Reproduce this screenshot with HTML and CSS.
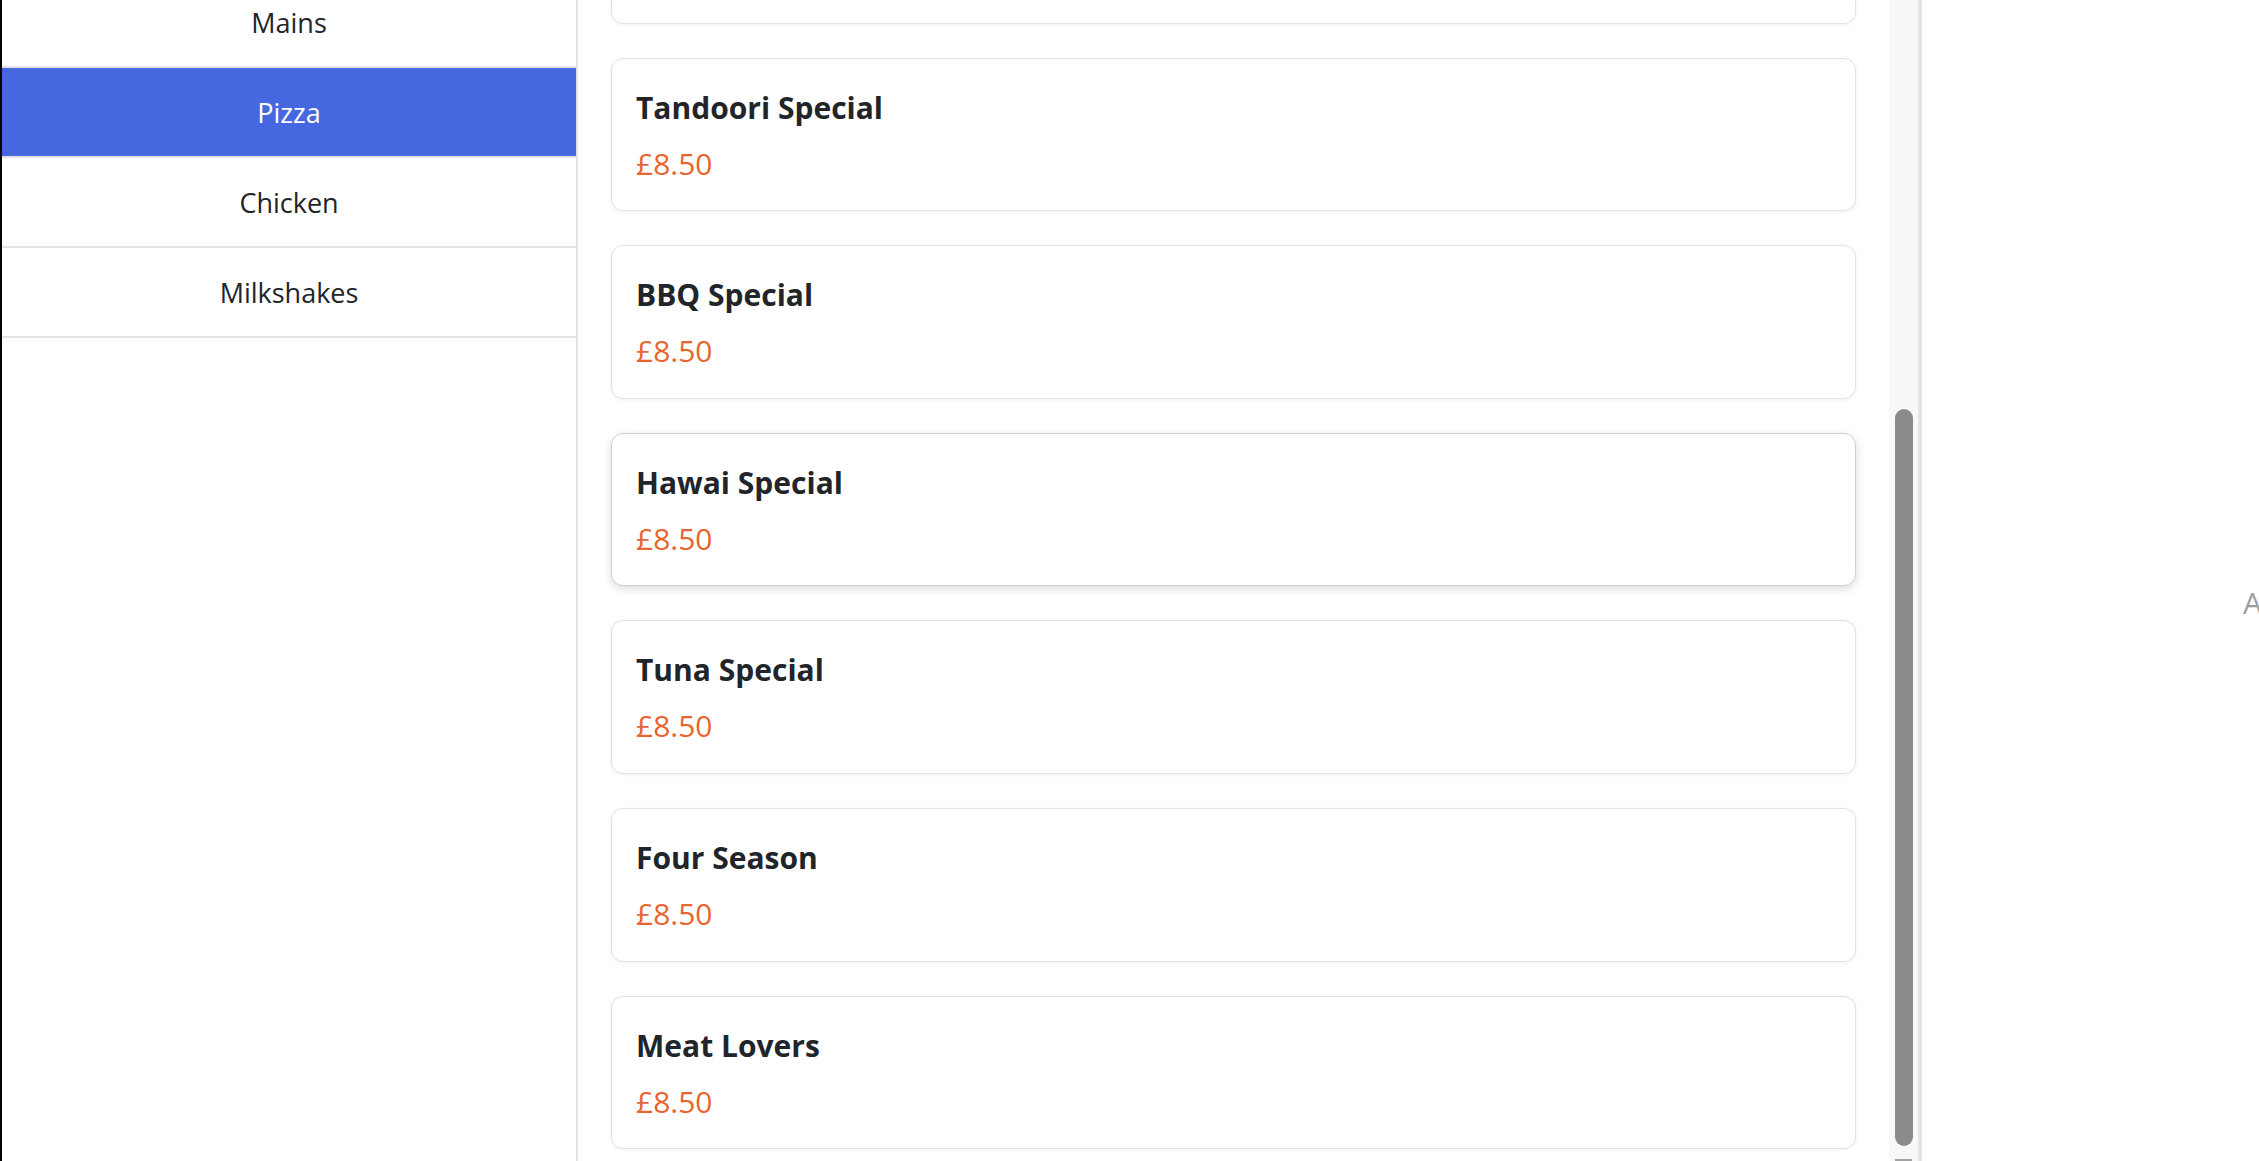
FILE: index.html
```html
<!DOCTYPE html>
<html lang="en">
<head>
<meta charset="utf-8">
<title>Menu</title>
<link rel="stylesheet" href="styles.css">
</head>
<body>
<div class="app">
  <aside class="sidebar">
    <ul class="cats">
      <li class="cat">Mains</li>
      <li class="cat active">Pizza</li>
      <li class="cat">Chicken</li>
      <li class="cat">Milkshakes</li>
    </ul>
  </aside>
  <main class="menu">
    <div class="items">
      <div class="card"><h5 class="card-title">Margherita</h5><p class="card-price">£8.50</p></div>
      <div class="card"><h5 class="card-title">Tandoori Special</h5><p class="card-price">£8.50</p></div>
      <div class="card"><h5 class="card-title">BBQ Special</h5><p class="card-price">£8.50</p></div>
      <div class="card hover"><h5 class="card-title">Hawai Special</h5><p class="card-price">£8.50</p></div>
      <div class="card"><h5 class="card-title">Tuna Special</h5><p class="card-price">£8.50</p></div>
      <div class="card"><h5 class="card-title">Four Season</h5><p class="card-price">£8.50</p></div>
      <div class="card"><h5 class="card-title">Meat Lovers</h5><p class="card-price">£8.50</p></div>
    </div>
  </main>
  <div class="scrollbar"><div class="thumb"></div><div class="arrow"></div></div>
  <section class="basket"><p class="empty">Add items to your order</p></section>
</div>
</body>
</html>
```
FILE: styles.css
```css
html, body {
  margin: 0;
  height: 100%;
  overflow: hidden;
  background: #fff;
}
body {
  font-family: "Open Sans", "Noto Sans", sans-serif;
}
.app {
  display: flex;
  height: 1161px;
  overflow: hidden;
}
.sidebar {
  width: 574px;
  flex: none;
  border-left: 2px solid #000;
  border-right: 2px solid #e4e4e6;
  overflow: hidden;
  background: #fff;
}
.cats {
  list-style: none;
  margin: -22px 0 0;
  padding: 0;
}
.cat {
  height: 88px;
  display: flex;
  align-items: center;
  justify-content: center;
  border-bottom: 2px solid #e3e4e8;
  font-size: 27px;
  color: #212529;
}
.cat.active {
  background: #4568e1;
  color: #fff;
}
.menu {
  width: 1245px;
  flex: none;
  padding: 0 33px;
  overflow: hidden;
  background: #fff;
}
.items {
  margin-top: -130px;
  display: flex;
  flex-direction: column;
  gap: 34px;
}
.card {
  border: 1px solid #e2e2e2;
  border-radius: 12px;
  padding: 31px 24px 28.6px;
  background: #fff;
  box-shadow: 0 1px 4px rgba(0, 0, 0, 0.06);
}
.card.hover {
  border-color: #d0d0d0;
  box-shadow: 0 3px 10px rgba(0, 0, 0, 0.14);
}
.card-title {
  margin: 0 0 20px;
  font-size: 30px;
  font-weight: 700;
  line-height: 36px;
  color: #212529;
}
.card-price {
  margin: 0;
  font-size: 30px;
  line-height: 36px;
  color: #e8652f;
}
.scrollbar {
  width: 23px;
  flex: none;
  padding-left: 6px;
  background: #f8f8f8;
  border-right: 4px solid #e6e4e2;
  display: flex;
  flex-direction: column;
  align-items: flex-start;
}
.thumb {
  margin-top: 409px;
  width: 18px;
  height: 737px;
  border-radius: 9px;
  background: #8b8b8b;
}
.arrow {
  margin-top: 13px;
  width: 17px;
  height: 2px;
  background: #a3a3a3;
}
.basket {
  flex: 1;
  min-width: 0;
  padding: 582px 0 0 321px;
  overflow: hidden;
  white-space: nowrap;
  background: #fff;
}
.empty {
  margin: 0;
  font-size: 30px;
  line-height: 41px;
  color: #9e9e9e;
}
```
